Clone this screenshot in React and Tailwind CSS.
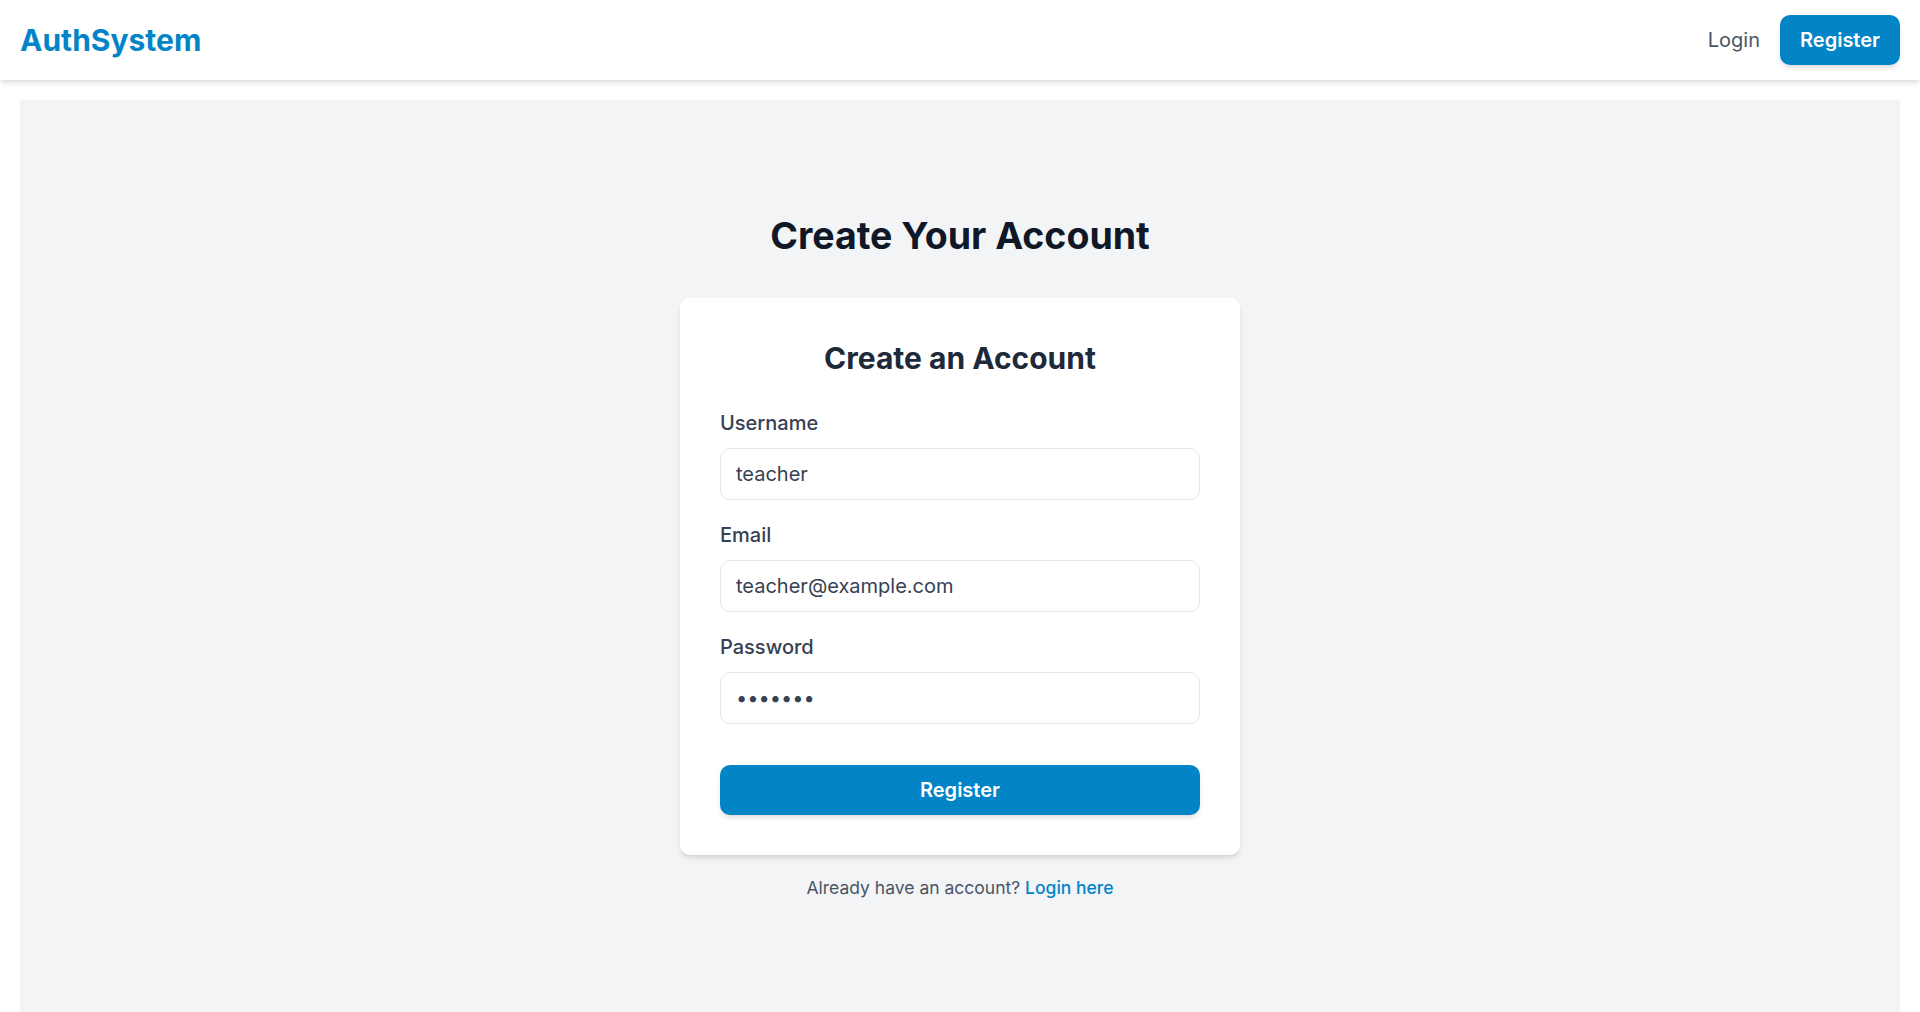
import { useState } from "react";

const Navbar = () => (
  <nav className="bg-white shadow-md h-20 px-5 flex items-center justify-between">
    <a href="#" className="text-[30px] leading-[38px] font-bold text-[#0284c7]">
      AuthSystem
    </a>
    <div className="flex items-center gap-5">
      <a href="#" className="text-xl leading-[30px] text-gray-600">
        Login
      </a>
      <a
        href="#"
        className="bg-[#0284c7] text-white text-xl leading-[30px] font-semibold px-5 py-[10px] rounded-[10px] shadow-md"
      >
        Register
      </a>
    </div>
  </nav>
);

const Field = ({ label, type = "text", value, last }) => (
  <div className={last ? "mb-[41px]" : "mb-5"}>
    <label className="block text-xl leading-[30px] font-medium text-gray-700 mb-[10px]">
      {label}
    </label>
    <input
      type={type}
      defaultValue={value}
      className="w-full h-[52px] px-[15px] text-xl text-gray-700 border border-gray-200 rounded-[10px] bg-white outline-none"
    />
  </div>
);

export default function App() {
  const [submitted, setSubmitted] = useState(false);

  return (
    <div className="min-h-screen bg-white font-['Inter',sans-serif]">
      <Navbar />
      <main className="m-5 bg-gray-100 min-h-[912px] flex flex-col items-center pt-[113px]">
        <h1 className="text-[37.5px] leading-[45px] font-bold text-gray-900 mb-10">
          Create Your Account
        </h1>
        <form
          onSubmit={(e) => {
            e.preventDefault();
            setSubmitted(true);
          }}
          className="w-[560px] bg-white rounded-[10px] shadow-md p-10"
        >
          <h2 className="text-[30px] leading-[40px] font-bold text-gray-800 text-center mb-[30px]">
            Create an Account
          </h2>
          <Field label="Username" value="teacher" />
          <Field label="Email" type="email" value="teacher@example.com" />
          <Field label="Password" type="password" value="1234567" last />
          <button
            type="submit"
            disabled={submitted}
            className="w-full h-[50px] bg-[#0284c7] text-white text-xl font-semibold rounded-[10px] shadow-md"
          >
            Register
          </button>
        </form>
        <p className="mt-5 text-[17.5px] leading-[25px] text-gray-600">
          Already have an account?{" "}
          <a href="#" className="text-[#0284c7] font-medium">
            Login here
          </a>
        </p>
      </main>
    </div>
  );
}
